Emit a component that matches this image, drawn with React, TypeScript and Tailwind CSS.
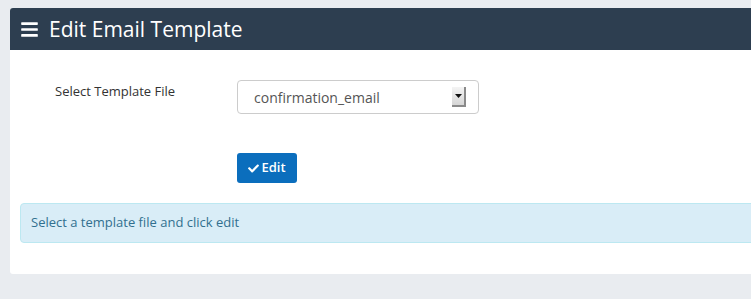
import { FaBars, FaCheck } from 'react-icons/fa';

const SelectArrow = () => (
  <span className="flex h-[20px] w-[14px] items-center justify-center border-r-2 border-b-2 border-[#8a8a8a] bg-gradient-to-b from-[#f4f4f4] to-[#d6d6d6]">
    <svg width="7" height="4" viewBox="0 0 7 4">
      <path d="M0 0h7L3.5 4z" fill="#111" />
    </svg>
  </span>
);

const App = () => (
  <div className="h-[299px] w-[751px] overflow-hidden bg-[#e9ecf0] pt-[8px] pl-[10px] font-['Open_Sans',sans-serif]">
    <div className="h-[266px] w-[800px] rounded-[3px] bg-white">
      <div className="flex h-[42px] items-center gap-[10px] rounded-t-[3px] bg-[#2d3e50] pl-[10px] text-white">
        <FaBars className="h-[19px] w-[19px]" />
        <h1 className="text-[21px] leading-none">Edit Email Template</h1>
      </div>

      <div className="px-[10px] pt-[30px]">
        <div className="flex">
          <label className="w-[217px] pt-[2px] pl-[35px] text-[13px] text-[#333]">
            Select Template File
          </label>
          <div className="flex h-[34px] w-[242px] items-center justify-between rounded-[4px] border border-[#ccc] pr-[12px] pl-[16px] text-[14px] text-[#555]">
            <span>confirmation_email</span>
            <SelectArrow />
          </div>
        </div>

        <div className="mt-[39px] pl-[217px]">
          <button className="flex h-[30px] w-[60px] items-center justify-center gap-[2px] rounded-[3px] bg-[#0b6ebd] text-[13px] font-semibold text-white">
            <FaCheck className="h-[11px] w-[11px]" />
            Edit
          </button>
        </div>

        <div className="mt-[20px] flex h-[40px] items-center rounded-[4px] border border-[#bce8f1] bg-[#d9edf7] pl-[10px] text-[13px] text-[#31708f]">
          Select a template file and click edit
        </div>
      </div>
    </div>
  </div>
);

export default App;
